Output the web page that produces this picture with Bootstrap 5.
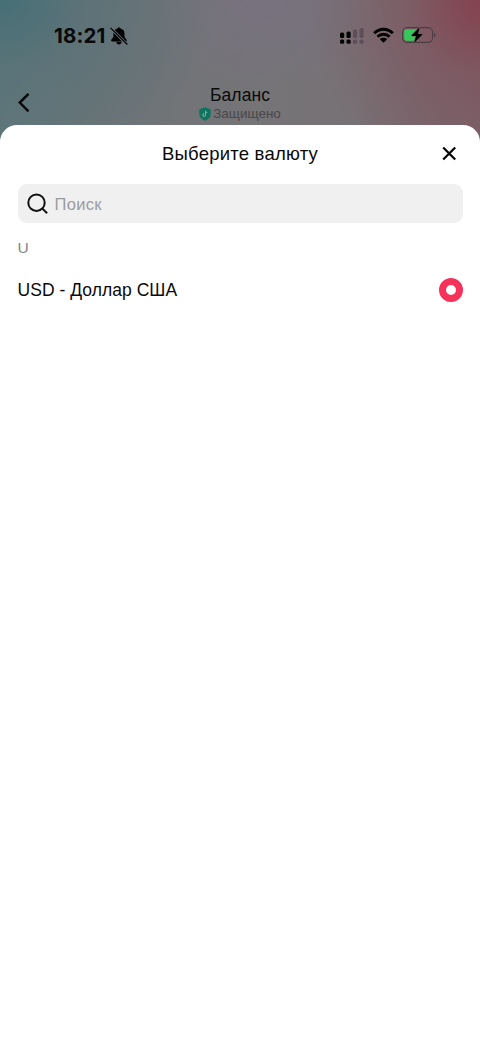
<!DOCTYPE html>
<html lang="ru">
<head>
<meta charset="utf-8">
<meta name="viewport" content="width=device-width, initial-scale=1">
<title>Выберите валюту</title>
<link href="https://cdn.jsdelivr.net/npm/bootstrap@5.3.0/dist/css/bootstrap.min.css" rel="stylesheet">
<style>
body{font-family:"Liberation Sans",Arial,sans-serif;color:#0a0a0a;height:1043px;overflow:hidden;
background:radial-gradient(ellipse 220px 170px at 0 0,#466f76 0,rgba(82,112,119,.5) 40%,rgba(100,115,122,0) 100%),radial-gradient(ellipse 170px 190px at 480px 0,#84424f 0,rgba(130,78,90,.5) 40%,rgba(122,100,108,0) 100%),radial-gradient(ellipse 120px 90px at 265px 0,#78717f,rgba(118,113,122,0)),linear-gradient(90deg,#61777a 0,#6b7478 20%,#737477 40%,#757477 55%,#777175 75%,#79636a 100%)}
svg{display:block;flex:none}
.status-row{height:70px;padding:2px 44px 0 54px}
.clock{font:700 20.5px/24px Inter,sans-serif;letter-spacing:.15px;width:56px;white-space:nowrap}
.head-row{height:55px;padding-left:16px;padding-right:16px}
.head-title{font-size:17.5px;line-height:20px;letter-spacing:.1px}
.secure{font-size:13.5px;line-height:16px;color:#4a474a;gap:2px}
.sheet{height:918px;border-radius:17px 17px 0 0;padding:0 17.5px}
.sheet-title{font-size:18.5px;line-height:24px;letter-spacing:.22px}
.search{height:39px;border-radius:9px;background:#f0f0f0;margin-top:2px;padding-left:9px;gap:7px}
.search input{font-size:16.5px;line-height:22px;letter-spacing:.3px;color:#0a0a0a}
.search input::placeholder{color:#9a9b9e;opacity:1}
.letter{font-size:15.5px;line-height:20px;color:#858589;margin-top:15px}
.choice{font-size:17.5px;line-height:24px;letter-spacing:.04px;margin-top:20px;height:24px}
.radio{width:24px;height:24px;border:7px solid #f6315a;background:#fff}
.side{width:24px}
</style>
</head>
<body>
<div class="status-row d-flex align-items-center">
<time class="clock">18:21</time>
<svg width="18" height="18" viewBox="0 0 18 18"><path d="M8.900.4c.8 0 1.500.5 1.600 1.200 2.600.6 4 2.500 4 5.100v2.500c0 1.900 2.300 2.800 2.300 4.300 0 .6-.3.900-.9.900H2.100c-.6 0-1-.3-1-.9 0-1.500 2.300-2.400 2.300-4.300V6.700c0-2.600 1.500-4.500 4-5.100C7.500.9 8.200.4 8.900.4Z M6.300 15h5.300c-.2 1.600-1.200 2.400-2.600 2.400S6.500 16.600 6.300 15Z"/><path d="M1.200 1.500 16.900 17.200" stroke="#69747a" stroke-width="2.900"/><path d="M.8 1.100 17.100 17.200" stroke="#000" stroke-width="1.200" stroke-linecap="round"/></svg>
<div class="d-flex align-items-center ms-auto">
<svg width="26" height="18" viewBox="0 0 26 18"><g><rect x="1" y="5.500" width="4.200" height="5.500" rx="1.500"/><rect x="1" y="12.500" width="4.200" height="4.200" rx="1.500"/><rect x="7.500" y="4.500" width="4.200" height="6.500" rx="1.500"/><rect x="7.500" y="12.500" width="4.200" height="4.200" rx="1.500"/></g><g fill="#5e4e57"><rect x="14" y="2.500" width="4.200" height="8.500" rx="1.500"/><rect x="14" y="12.500" width="4.200" height="4.200" rx="1.500"/><rect x="20.500" y="1" width="4.200" height="10" rx="1.500"/><rect x="20.500" y="12.500" width="4.200" height="4.200" rx="1.500"/></g></svg>
<svg class="ms-2" style="margin-top:-2px" width="21" height="17" viewBox="0 0 21 17" fill="none" stroke="#000" stroke-width="2.900"><path d="M1.200 6.300C6.300.9 14.700.9 19.800 6.300M4.500 9.800c3.300-3.400 8.700-3.400 12 0"/><path fill="#000" stroke="none" d="M6.900 12.200c2-1.900 5.200-1.900 7.200 0L11.100 15.200q-.6.600-1.200 0Z"/></svg>
<svg style="margin-left:8px;margin-top:-2px" width="34" height="18" viewBox="0 0 34 18"><rect x=".6" y="1.600" width="30" height="14.800" rx="4.600" fill="none" stroke="#4d3d43" stroke-width="1.100"/><path d="M5 3.200h11v11.600H5Q2.200 14.800 2.200 12V6Q2.200 3.200 5 3.200" fill="#36c75b"/><path d="M32 6.700c2 .8 2 3.800 0 4.600Z" fill="#4d3d43"/><path d="M17.600 1.200 9.800 9.200Q9.300 10 10.300 10h3.800l-2 6.900L20.200 8.700Q20.600 7.900 19.700 7.900h-3.700Z" fill="#000" stroke="#775d65" stroke-width="1.200" paint-order="stroke" stroke-linejoin="round"/></svg>
</div>
</div>
<header class="head-row d-flex justify-content-between">
<svg class="side" height="24" viewBox="0 0 24 24" style="margin-top:20px"><path d="M12.500 3.900 3.800 12.600 12.500 21.300" fill="none" stroke="#0a0a0c" stroke-width="2.500"/></svg>
<div class="text-center" style="padding-top:15px">
<div class="head-title">Баланс</div>
<div class="secure d-flex align-items-center" style="padding-top:1px"><svg width="12" height="14" viewBox="0 0 12 14"><path d="M6 .2 11.700 2.200V7c0 3-2.200 5.500-5.700 6.800C2.500 12.500.3 10 .3 7V2.200Z" fill="#0c7560"/><path d="M6.500 3.800v4.300a1.400 1.400 0 1 1-1.300-1.400M6.500 4c.2 1 .9 1.500 1.900 1.500" fill="none" stroke="#91aaa5" stroke-width="1"/></svg><span>Защищено</span></div>
</div>
<div class="side"></div>
</header>
<main class="sheet bg-white">
<div class="d-flex align-items-center justify-content-between" style="height:57px">
<div class="side"></div>
<div class="sheet-title">Выберите валюту</div>
<svg class="side" height="24" viewBox="0 0 24 24"><path d="m5.200 5.500 12 12M17.200 5.500 5.200 17.500" fill="none" stroke="#080808" stroke-width="2.300"/></svg>
</div>
<label class="search d-flex align-items-center">
<svg width="21" height="21" viewBox="0 0 21 21" fill="none" stroke="#111" stroke-width="2"><circle cx="9.500" cy="9.700" r="8.200"/><path d="m15.200 15.400 4.900 4.900"/></svg>
<input class="border-0 bg-transparent p-0 flex-grow-1" type="text" placeholder="Поиск">
</label>
<div class="letter">U</div>
<div class="choice d-flex align-items-center justify-content-between"><span>USD - Доллар США</span><span class="radio rounded-circle"></span></div>
</main>
<script src="https://cdn.jsdelivr.net/npm/bootstrap@5.3.0/dist/js/bootstrap.bundle.min.js"></script>
</body>
</html>
